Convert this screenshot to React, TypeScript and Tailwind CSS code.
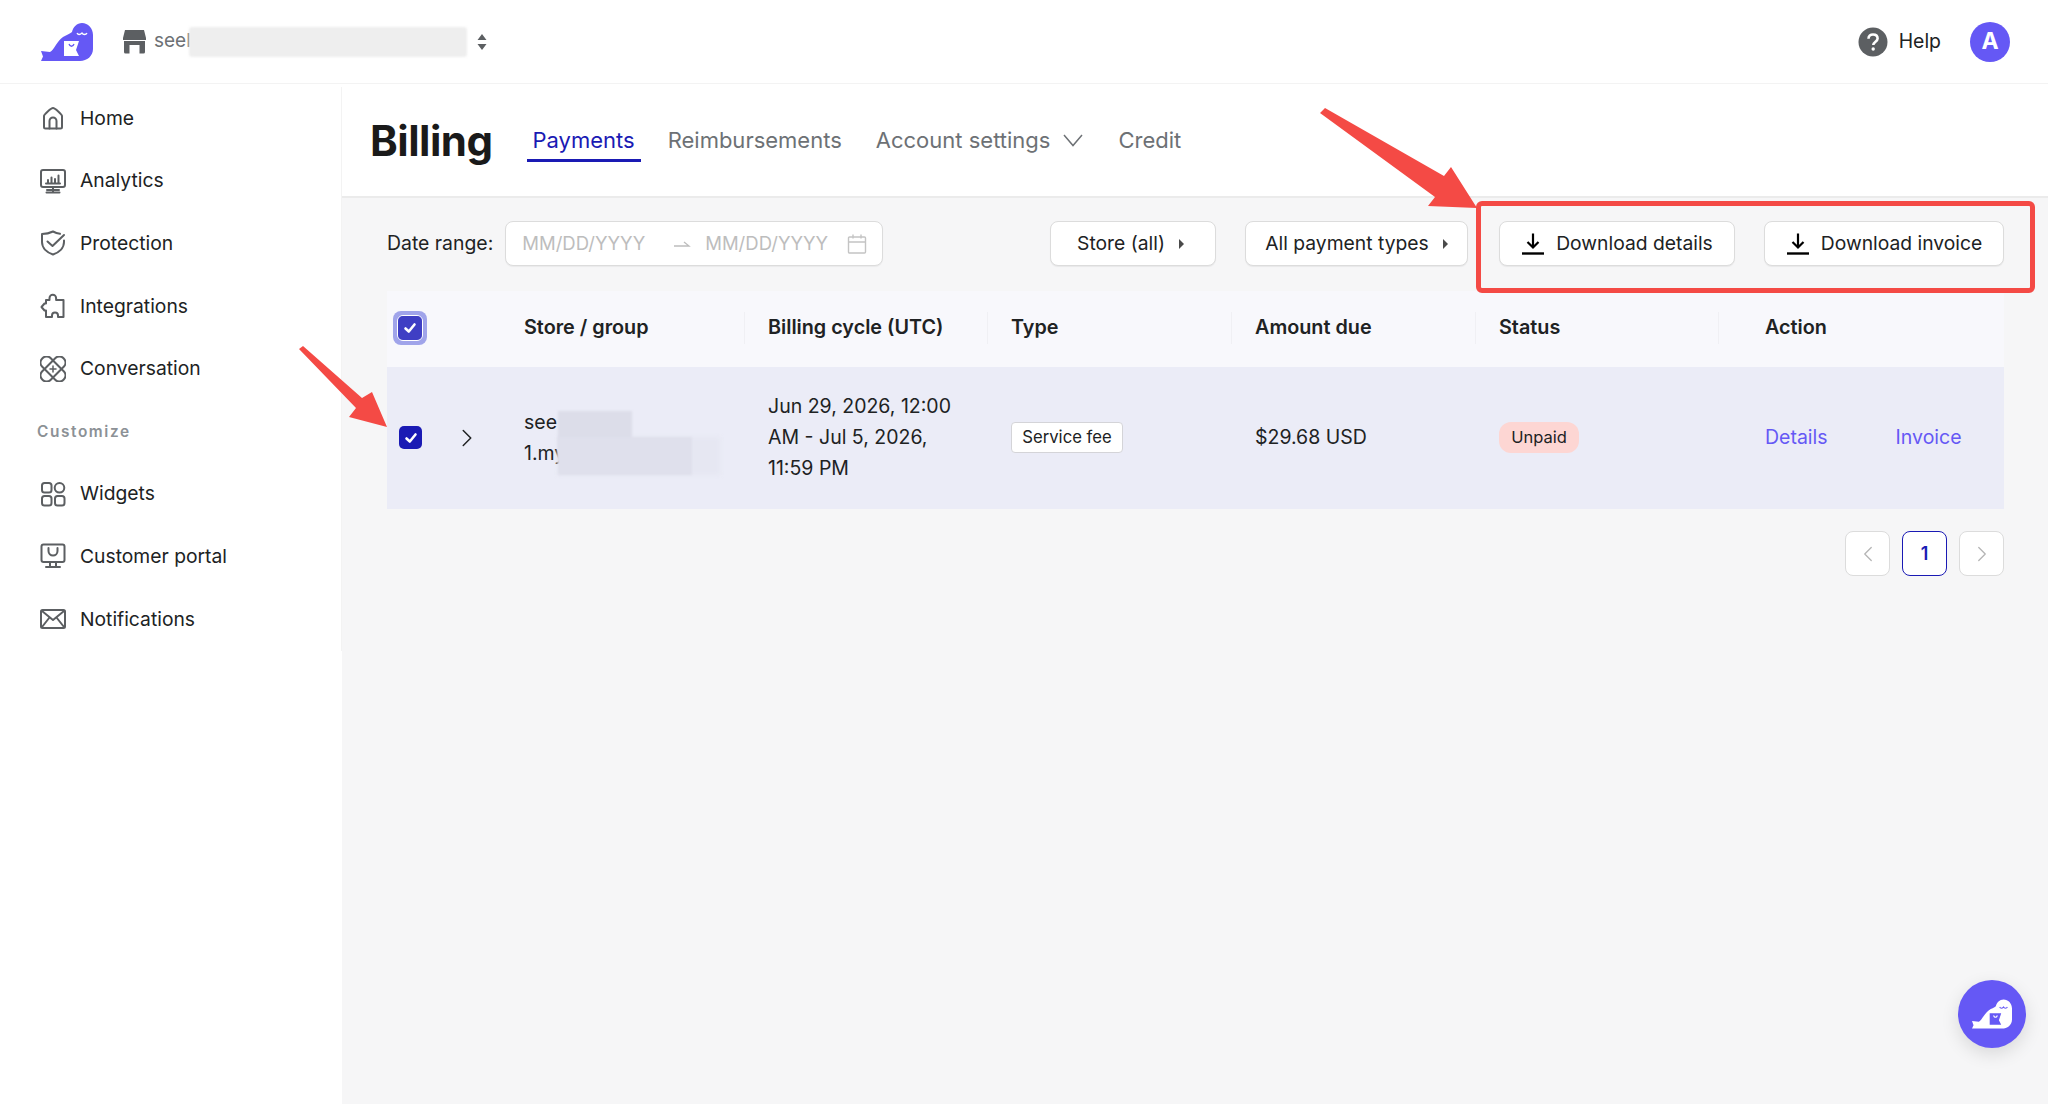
import type { ReactNode } from 'react'
import { ChevronLeft, ChevronRight } from 'lucide-react'

const stroke = {
  fill: 'none',
  stroke: '#5c5f62',
  strokeWidth: 2,
  strokeLinecap: 'round' as const,
  strokeLinejoin: 'round' as const,
}

function NavIcon({ children }: { children: ReactNode }) {
  return (
    <svg width="26" height="26" viewBox="0 0 26 26" {...stroke} className="shrink-0">
      {children}
    </svg>
  )
}

const mainNav = [
  {
    label: 'Home',
    icon: (
      <>
        <path d="M4 11 C4 9.5 11 3 13 3 C15 3 22 9.5 22 11 V22 a1.5 1.5 0 0 1 -1.5 1.5 H5.5 a1.5 1.5 0 0 1 -1.5 -1.5 Z" />
        <path d="M9.5 23.5 V16 a3.5 3.5 0 0 1 7 0 V23.5" />
      </>
    ),
  },
  {
    label: 'Analytics',
    icon: (
      <>
        <rect x="1" y="2" width="24" height="17" rx="2" />
        <path d="M6 15.5 H20 M8 15 V12 M11.5 15 V9.5 M15 15 V11 M18.5 15 V7.5" />
        <path d="M13 19 V24 M6.5 24.5 H19.5 M7 22 H19" />
      </>
    ),
  },
  {
    label: 'Protection',
    icon: (
      <>
        <path d="M20 3.8 C17.5 3.5 15 2.6 13 1.5 C10 3 6.5 4 2 4 V12 C2 18 7 22.5 13 24.5 C19 22.5 24 18 24 12 V10.5" />
        <path d="M7.5 11.5 L12.5 16 L24 5" />
      </>
    ),
  },
  {
    label: 'Integrations',
    icon: (
      <path d="M9.5 7 V5 a3.3 3.3 0 0 1 6.6 0 V7 H23.5 V24 H18 V22.5 a3 3 0 0 0 -6 0 V24 H6 V17.5 H4.5 L1.5 14 L4.5 10.5 H6 V7 Z" />
    ),
  },
  {
    label: 'Conversation',
    icon: (
      <>
        <rect x="-2" y="7" width="30" height="12" rx="5.5" transform="rotate(45 13 13)" />
        <rect x="-2" y="7" width="30" height="12" rx="5.5" transform="rotate(-45 13 13)" />
        <path d="M13 10 V16 M10 13 H16" strokeWidth="1.5" />
      </>
    ),
  },
]

const customizeNav = [
  {
    label: 'Widgets',
    icon: (
      <>
        <rect x="2" y="2" width="9.5" height="9.5" rx="2.5" />
        <circle cx="19.5" cy="6.8" r="4.8" />
        <rect x="2" y="15" width="9.5" height="9.5" rx="2.5" />
        <rect x="15" y="15" width="9.5" height="9.5" rx="2.5" />
      </>
    ),
  },
  {
    label: 'Customer portal',
    icon: (
      <>
        <rect x="1.5" y="1.5" width="23" height="17.5" rx="2" />
        <path d="M8.5 5 V8 a4.5 4.5 0 0 0 9 0 V5" />
        <path d="M10 19 V23.5 M16 19 V23.5 M6 24 H20" />
      </>
    ),
  },
  {
    label: 'Notifications',
    icon: (
      <>
        <rect x="1" y="4" width="24" height="18" rx="1.5" />
        <path d="M2 5 L13 14 L24 5 M2 21 L9.5 11.5 M24 21 L16.5 11.5" />
      </>
    ),
  },
]

function NavItem({ label, icon }: { label: string; icon: ReactNode }) {
  return (
    <div className="flex h-[62.6px] items-center gap-[14px] pl-[40px] text-[19.3px] text-[#202223]">
      <NavIcon>{icon}</NavIcon>
      <span>{label}</span>
    </div>
  )
}

function SealLogo() {
  return (
    <svg width="52" height="38" viewBox="0 0 52 38" className="shrink-0">
      <path
        d="M0 38 L2 33.5 L0 28 L9 29 C13 27 16 18 22 14 C25 12 29 11 31 9 C32 4 36 0 41 0 C47 0 52 5 52 12 L52 26 C52 33 46 38 39 38 Z"
        fill="#6558f5"
      />
      <path d="M23 18 L38 18 L35 27 L38 33 L23 33 Z" fill="#fff" />
      <path d="M28 21 C29 24 32 24 33 21" fill="none" stroke="#6558f5" strokeWidth="1.3" />
      <path d="M36 10 C37 12 39 12 41 10 C42 12 45 12 46 10" fill="none" stroke="#fff" strokeWidth="1.3" />
    </svg>
  )
}

function Checkbox() {
  return (
    <div className="flex h-[23px] w-[23px] shrink-0 items-center justify-center rounded-[5px] bg-[#1a1ab4]">
      <svg width="16" height="16" viewBox="0 0 16 16" fill="none" stroke="#fff" strokeWidth="2.6" strokeLinecap="round" strokeLinejoin="round">
        <path d="M3.5 8.5 L6.8 11.5 L12.5 4.5" />
      </svg>
    </div>
  )
}

function DownloadIcon() {
  return (
    <svg width="24" height="24" viewBox="0 0 24 24" fill="none" stroke="#000" strokeWidth="2.2" className="shrink-0">
      <path d="M12 1.5 V15 M6.5 10 L12 15.5 L17.5 10" />
      <path d="M1 21.5 H23" strokeWidth="2.4" />
    </svg>
  )
}

function Caret() {
  return <span className="ml-[14px] h-0 w-0 border-y-[5px] border-l-[5px] border-y-transparent border-l-[#4a4a4a]" />
}

const btn =
  'flex h-[45px] items-center rounded-[8px] border border-[#dcdcdc] bg-white text-[19.3px] text-[#202223] shadow-[0_1px_1px_rgba(0,0,0,0.06)]'

const headers = ['Store / group', 'Billing cycle (UTC)', 'Type', 'Amount due', 'Status', 'Action']

export default function App() {
  return (
    <div className="relative flex h-screen w-full flex-col overflow-hidden bg-white font-[Inter,sans-serif]">
      {/* Top bar */}
      <header className="flex h-[84px] shrink-0 items-center border-b border-[#f3f3f3] pl-[41px] pr-[38px]">
        <SealLogo />
        <svg width="23" height="24" viewBox="0 0 23 24" className="ml-[30px] shrink-0">
          <path d="M2 0 H21 L23 8 V10 H0 V8 Z" fill="#5c5f62" />
          <path d="M1 11 H22 V22 a1.5 1.5 0 0 1 -1.5 1.5 H16.5 V15 H6.5 V23.5 H2.5 A1.5 1.5 0 0 1 1 22 Z" fill="#5c5f62" />
        </svg>
        <span className="ml-[8px] w-[35px] text-[19px] text-[#6d7175]">seel</span>
        <div className="h-[30px] w-[278px] rounded-[3px] bg-[#eeeeee] blur-[1px]" />
        <svg width="10" height="16" viewBox="0 0 10 16" className="ml-[10px] shrink-0" fill="#5c5f62">
          <path d="M5 0 L9.5 6 H0.5 Z M5 16 L0.5 10 H9.5 Z" />
        </svg>
        <div className="ml-auto flex items-center">
          <svg width="30" height="30" viewBox="0 0 30 30" className="shrink-0">
            <circle cx="15" cy="15" r="14.5" fill="#5c5f62" />
            <path d="M10.5 11.8 C10.5 9 12.6 7.5 15 7.5 C17.6 7.5 19.6 9 19.6 11.5 C19.6 14.6 15.3 14.8 15.3 18" fill="none" stroke="#fff" strokeWidth="2.6" />
            <circle cx="15.2" cy="22" r="1.7" fill="#fff" />
          </svg>
          <span className="ml-[11px] text-[19.4px] text-[#202223]">Help</span>
          <div className="ml-[29px] flex h-[40px] w-[40px] items-center justify-center rounded-full bg-[#6558f5] text-[23px] font-bold text-white">
            A
          </div>
        </div>
      </header>

      <div className="flex min-h-0 flex-1">
        {/* Sidebar */}
        <aside className="w-[342px] shrink-0 bg-white pt-[3px]">
          <div className="h-[564px] border-r border-[#f3f3f3]">
            {mainNav.map((item) => (
              <NavItem key={item.label} {...item} />
            ))}
            <div className="flex h-[62.6px] items-center pl-[37px] text-[15.4px] font-semibold tracking-[1.6px] text-[#8c9196]">
              Customize
            </div>
            {customizeNav.map((item) => (
              <NavItem key={item.label} {...item} />
            ))}
          </div>
        </aside>

        <main className="min-w-0 flex-1 bg-[#f6f6f7]">
          {/* Title + tabs */}
          <div className="flex h-[114px] items-start border-b-[2px] border-[#ebebeb] bg-white pl-[28px]">
            <h1 className="mt-[32px] text-[42px] leading-[50px] font-bold tracking-[-0.5px] text-[#1a1a1a]">Billing</h1>
            <div className="ml-[34px] flex items-start text-[22px] text-[#6d7175]">
              <div className="mt-[41px] h-[37px] border-b-[3px] border-[#1a1ab4] px-[6px] leading-[30px] text-[#1a1ab4]">Payments</div>
              <div className="mt-[40px] ml-[27px] leading-[32px]">Reimbursements</div>
              <div className="mt-[40px] ml-[34px] flex items-center leading-[32px]">
                Account settings
                <svg width="20" height="13" viewBox="0 0 20 13" fill="none" stroke="#6d7175" strokeWidth="1.5" className="ml-[13px] shrink-0">
                  <path d="M1 1 L10 11.5 L19 1" />
                </svg>
              </div>
              <div className="mt-[40px] ml-[35px] leading-[32px]">Credit</div>
            </div>
          </div>

          <div className="pr-[44px] pl-[45px]">
            {/* Filters */}
            <div className="mt-[23px] flex items-center">
              <span className="text-[19.4px] text-[#202223]">Date range:</span>
              <div className="ml-[12px] flex h-[45px] w-[378px] items-center rounded-[8px] border border-[#dcdcdc] bg-white pl-[16px] text-[18.5px] text-[#bdbdbd] shadow-[0_1px_1px_rgba(0,0,0,0.05)]">
                <span>MM/DD/YYYY</span>
                <svg width="18" height="10" viewBox="0 0 18 10" className="mr-[14px] ml-[28px] shrink-0" fill="none" stroke="#bdbdbd" strokeWidth="1.3">
                  <path d="M1 7 H16 L11 3" />
                </svg>
                <span>MM/DD/YYYY</span>
                <svg width="20" height="20" viewBox="0 0 20 20" className="ml-[19px] shrink-0" fill="none" stroke="#c4c4c4" strokeWidth="1.4">
                  <rect x="1.5" y="3" width="17" height="16" rx="1" />
                  <path d="M1.5 8 H18.5 M6 0.5 V4.5 M14 0.5 V4.5" />
                </svg>
              </div>
              <div className="ml-auto flex gap-[29px]">
                <button className={`${btn} w-[166px] justify-center pr-[5px]`}>
                  Store (all)
                  <Caret />
                </button>
                <button className={`${btn} w-[223px] justify-center`}>
                  All payment types
                  <Caret />
                </button>
                <button className={`${btn} ml-[2px] w-[236px] justify-center gap-[11px]`}>
                  <DownloadIcon />
                  Download details
                </button>
                <button className={`${btn} w-[240px] justify-center gap-[11px]`}>
                  <DownloadIcon />
                  Download invoice
                </button>
              </div>
            </div>

            {/* Table */}
            <div className="mt-[25px] text-[19.5px] text-[#202223]">
              <div className="grid h-[76px] grid-cols-[113px_244px_243px_244px_244px_243px_1fr] items-center bg-[#f8f8fc] pb-[2px] text-[19.8px] font-semibold">
                <div className="pl-[6px]">
                  <div className="flex h-[34px] w-[34px] items-center justify-center rounded-[8px] bg-[#a0a4ea]">
                    <div className="rounded-[6px] border border-white">
                      <div className="flex h-[24px] w-[24px] items-center justify-center rounded-[5px] bg-[#3f3fc4]">
                        <svg width="16" height="16" viewBox="0 0 16 16" fill="none" stroke="#fff" strokeWidth="2.6" strokeLinecap="round" strokeLinejoin="round">
                          <path d="M3.5 8.5 L6.8 11.5 L12.5 4.5" />
                        </svg>
                      </div>
                    </div>
                  </div>
                </div>
                {headers.map((h, i) => (
                  <div
                    key={h}
                    className={`flex h-[32px] items-center ${i === 0 ? 'pl-[24px]' : 'border-l border-[#f0f0f4]'} ${i > 0 && i < 5 ? 'pl-[23px]' : ''} ${i === 5 ? 'pl-[46px]' : ''}`}
                  >
                    {h}
                  </div>
                ))}
              </div>

              <div className="grid h-[142px] grid-cols-[113px_244px_243px_244px_244px_243px_1fr] items-center bg-[#ebecf7] pb-[1px]">
                <div className="flex items-center pl-[12px]">
                  <Checkbox />
                  <ChevronRight size={30} strokeWidth={1.2} className="ml-[30px] shrink-0 text-[#202223]" />
                </div>
                <div className="relative pl-[24px] leading-[31px]">
                  <div>see</div>
                  <div>1.my</div>
                  <div className="absolute top-[30px] left-[58px] h-[38px] w-[162px] bg-[#e6e7f2] blur-[2px]" />
                  <div className="absolute top-[4px] left-[58px] h-[50px] w-[74px] bg-[#dcdde9] blur-[1px]" />
                  <div className="absolute top-[30px] left-[58px] h-[38px] w-[134px] bg-[#dfe0ec] blur-[1px]" />
                </div>
                <div className="pl-[24px] leading-[31px]">
                  Jun 29, 2026, 12:00
                  <br />
                  AM - Jul 5, 2026,
                  <br />
                  11:59 PM
                </div>
                <div className="pl-[24px]">
                  <span className="inline-flex h-[31px] w-[112px] items-center justify-center rounded-[4px] border border-[#d4d4d8] bg-white text-[16.7px]">
                    Service fee
                  </span>
                </div>
                <div className="pl-[24px]">$29.68 USD</div>
                <div className="pl-[24px]">
                  <span className="inline-flex h-[31px] w-[80px] items-center justify-center rounded-[12px] bg-[#fdd6d3] text-[16.5px]">
                    Unpaid
                  </span>
                </div>
                <div className="flex pl-[47px] text-[#6558f5]">
                  <span>Details</span>
                  <span className="ml-[68px]">Invoice</span>
                </div>
              </div>
            </div>

            {/* Pagination */}
            <div className="mt-[22px] flex justify-end gap-[12px]">
              <div className="flex h-[45px] w-[45px] items-center justify-center rounded-[8px] border border-[#dcdcdc] bg-white text-[#b5b5b5]">
                <ChevronLeft size={26} strokeWidth={1.2} />
              </div>
              <div className="flex h-[45px] w-[45px] items-center justify-center rounded-[8px] border border-[#1a1ab4] bg-white text-[18px] font-semibold text-[#1a1ab4]">
                1
              </div>
              <div className="flex h-[45px] w-[45px] items-center justify-center rounded-[8px] border border-[#dcdcdc] bg-white text-[#b5b5b5]">
                <ChevronRight size={26} strokeWidth={1.2} />
              </div>
            </div>
          </div>
        </main>
      </div>

      {/* Annotations over the screenshot */}
      <div className="pointer-events-none absolute top-[201px] left-[1476px] h-[92px] w-[559px] rounded-[6px] border-[5px] border-[#f44a45]" />
      <svg className="pointer-events-none absolute top-0 left-0" width="2048" height="1104" fill="#f44a45">
        <polygon points="1320,113 1325,108 1444,176 1451,167 1477,208 1428,206 1435,197" />
        <polygon points="299,349 303,346 362,398 372,392 387,427 349,417 356,408" />
      </svg>

      {/* Chat bubble */}
      <div className="absolute top-[980px] left-[1958px] flex h-[68px] w-[68px] items-center justify-center rounded-full bg-[#6558f5] shadow-[0_6px_18px_rgba(0,0,0,0.12)]">
        <svg width="40" height="30" viewBox="0 0 52 38">
          <path
            d="M0 38 L2 33.5 L0 28 L9 29 C13 27 16 18 22 14 C25 12 29 11 31 9 C32 4 36 0 41 0 C47 0 52 5 52 12 L52 26 C52 33 46 38 39 38 Z"
            fill="#fff"
          />
          <path d="M23 18 L38 18 L35 27 L38 33 L23 33 Z" fill="#6558f5" />
          <path d="M28 21 C29 24 32 24 33 21" fill="none" stroke="#fff" strokeWidth="1.5" />
          <path d="M36 10 C37 12 39 12 41 10 C42 12 45 12 46 10" fill="none" stroke="#6558f5" strokeWidth="1.5" />
        </svg>
      </div>
    </div>
  )
}
